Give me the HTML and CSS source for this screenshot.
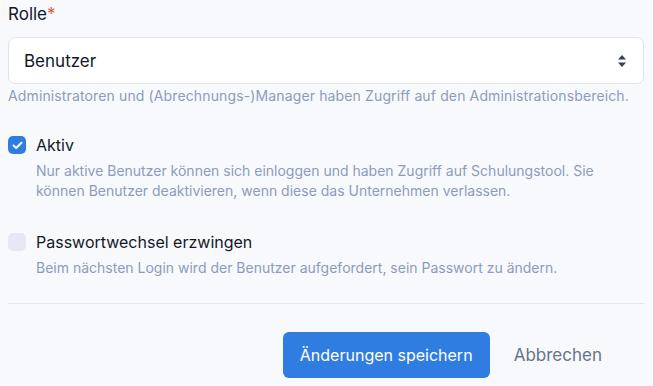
FILE: index.html
```html
<!DOCTYPE html>
<html lang="de">
<head>
<meta charset="utf-8">
<link rel="stylesheet" href="styles.css">
</head>
<body>
<form class="form">
  <div class="field">
    <label class="label">Rolle<span class="req">*</span></label>
    <div class="select">
      <span class="select-value">Benutzer</span>
      <svg class="select-arrow" width="10" height="14" viewBox="0 0 10 14"><path d="M5 1 L9 5.5 H1 Z M5 13 L9 8.5 H1 Z" fill="#374151"/></svg>
    </div>
    <p class="help">Administratoren und (Abrechnungs-)Manager haben Zugriff auf den Administrationsbereich.</p>
  </div>

  <div class="check">
    <span class="box box-on"><svg width="11" height="9" viewBox="0 0 11 9"><path d="M1.5 4.5 L4.2 7 L9.5 1.8" fill="none" stroke="#fff" stroke-width="2" stroke-linecap="round" stroke-linejoin="round"/></svg></span>
    <div class="check-text">
      <div class="check-label">Aktiv</div>
      <p class="check-help">Nur aktive Benutzer können sich einloggen und haben Zugriff auf Schulungstool. Sie können Benutzer deaktivieren, wenn diese das Unternehmen verlassen.</p>
    </div>
  </div>

  <div class="check">
    <span class="box"></span>
    <div class="check-text">
      <div class="check-label">Passwortwechsel erzwingen</div>
      <p class="check-help">Beim nächsten Login wird der Benutzer aufgefordert, sein Passwort zu ändern.</p>
    </div>
  </div>

  <div class="actions">
    <button type="button" class="btn-primary">Änderungen speichern</button>
    <button type="button" class="btn-link">Abbrechen</button>
  </div>
</form>
</body>
</html>
```
FILE: styles.css
```css
* { box-sizing: border-box; }
html, body { margin: 0; padding: 0; background: #f8f9fc; }
body { font-family: "Inter", "Liberation Sans", sans-serif; color: #111827; }
.form { padding: 4px 9px 0 8px; }
.label { display: block; font-size: 17px; line-height: 20px; color: #111827; }
.req { color: #e8553f; }
.select {
  margin-top: 13px;
  height: 47px;
  background: #fff;
  border: 1px solid #dfe3ee;
  border-radius: 7px;
  display: flex; align-items: center; justify-content: space-between;
  padding: 0 16px 0 15px;
}
.select-value { font-size: 17px; color: #111827; }
.help { margin: 2px 0 0; font-size: 14px; line-height: 20px; color: #8e9bbd; letter-spacing: 0.13px; }
.check { display: flex; gap: 10px; margin-top: 29px; }
.check + .check { margin-top: 31px; }
.box { width: 18px; height: 18px; border-radius: 5px; background: #e6e9f3; flex: none; margin-top: 1px; display: flex; align-items: center; justify-content: center; }
.box-on { background: #2f7de1; }
.check-label { font-size: 16px; line-height: 20px; color: #111827; }
.check-help { margin: 6px 0 0; font-size: 14px; line-height: 20px; color: #8e9bbd; }
.actions {
  margin-top: 25px;
  border-top: 1px solid #e3e6ee;
  padding-top: 28px;
  display: flex; justify-content: flex-end; align-items: center;
  padding-right: 42px;
}
.btn-primary {
  font-family: inherit; font-size: 16px; color: #fff;
  background: #2f7de1; border: 0; border-radius: 6px;
  height: 46px; padding: 0 16px; width: 207px;
}
.btn-link { font-family: inherit; font-size: 17px; color: #6b7289; background: none; border: 0; padding: 0; margin-left: 24px; }
```
